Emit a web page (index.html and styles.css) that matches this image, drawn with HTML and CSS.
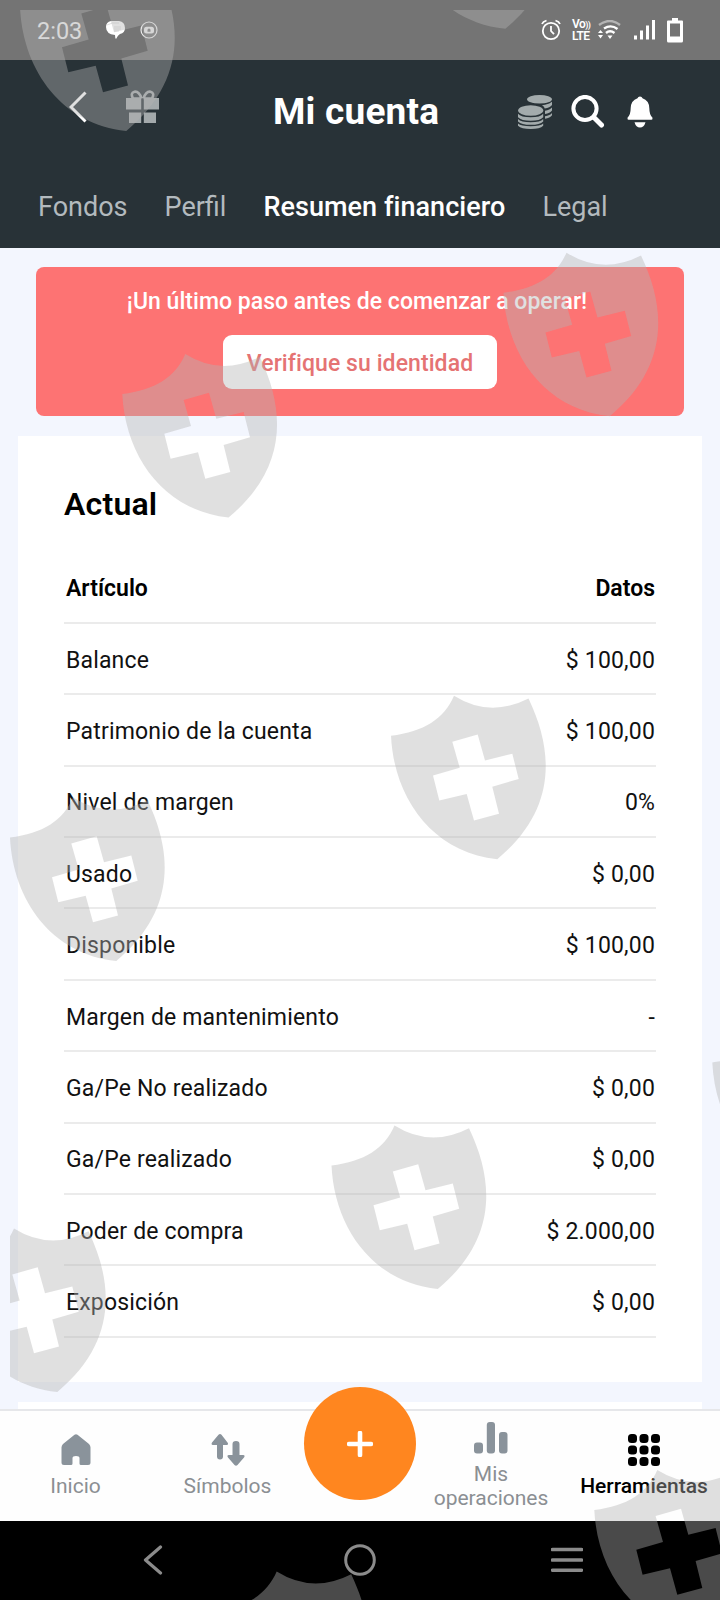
FILE: index.html
```
<!DOCTYPE html>
<html lang="es">

<head>
    <meta charset="UTF-8">
    <meta name="viewport" content="width=device-width, initial-scale=1.0">
    <title>Mi cuenta</title>
    <link rel="stylesheet" href="styles.css">
</head>

<body>
    <div class="status-bar">
        <span class="time">2:03</span>
        <svg class="chat-icon" width="20" height="19" viewBox="0 0 20 19">
            <path d="M5 0h8q6 1 6 7q0 5-5 6q-2 1-4 5q-1-1-1-4Q0 13 0 6Q0 1 5 0z" fill="#fff" />
            <path d="M1 4Q6 1 13 2M8 6h7M8 8h7M8 10h5" stroke="#ccc" stroke-width="0.6" fill="none" />
        </svg>
        <svg class="app-icon" width="18" height="18" viewBox="0 0 18 18">
            <circle cx="9" cy="9" r="8" fill="none" stroke="#eee" stroke-width="1.2" />
            <rect x="4" y="5.8" width="10" height="6.8" rx="2.5" fill="#eee" />
            <path d="M7.5 10.8V9a1.5 1.5 0 0 1 3 0v1.8z" fill="#777" />
        </svg>
        <div class="status-right">
            <svg width="20" height="22" viewBox="0 0 20 22" fill="none" stroke="#fff" stroke-width="1.8">
                <circle cx="10" cy="12" r="8.2" />
                <path d="M10 7v5l3 3.2M1 5Q2 2.5 5.5 1.5M19 5Q18 2.5 14.5 1.5" />
            </svg>
            <div class="volte"><span>Vo<i>))</i></span><span>LTE</span></div>
            <svg class="wifi" width="23" height="20" viewBox="0 0 23 20" fill="none">
                <path d="M1 5Q12-3 22 5" stroke="#b4b4b4" stroke-width="2.4" />
                <path d="M6 8.500Q13 4 19.5 9M8 13Q12 9.5 16.500 13" stroke="#fff" stroke-width="2.4" />
                <path d="M9.5 15.5h5L12 19zM0 13l2.5-3L5 13zM0 15h5l-2.5 3.5z" fill="#fff" />
            </svg>
            <svg class="signal" width="22" height="20" viewBox="0 0 22 20" fill="#fff">
                <rect x="0" y="15.5" width="3" height="4" />
                <rect x="6" y="10.5" width="3" height="9" />
                <rect x="12" y="5.5" width="3" height="14" />
                <rect x="18" y="0" width="3" height="19.5" />
            </svg>
            <svg class="battery" width="16" height="25" viewBox="0 0 16 25">
                <path d="M5 0h6v2.5h4q1 0 1 1V23q0 1.5-1.5 1.5h-13Q0 24.500 0 23V3.500q0-1 1-1h4zM3 5.500V18.500H13V5.500z" fill="#fff" fill-rule="evenodd" />
            </svg>
        </div>
    </div>

    <div class="header">
        <div class="title-row">
            <svg class="back-arrow" width="18" height="32" viewBox="0 0 18 32">
                <path d="M16.500 1.500L2 16L16.500 30.500" fill="none" stroke="#fff" stroke-width="3" />
            </svg>
            <svg class="gift" width="33" height="34" viewBox="0 0 33 34">
                <path d="M14.800 8.500H7Q4 3 8.500 1.700Q13 1 15.500 8.500M17.800 8.500H26Q29 3 24.500 1.700Q20 1 17.500 8.500" fill="none" stroke="#a3a9ab" stroke-width="2.600" />
                <path d="M0 8h15.200v11.500H0zM17.800 8H33v11.500H17.800zM3 22.500h12.200V33H3zM17.800 22.500H30V33H17.800z" fill="#a3a9ab" />
            </svg>
            <h1>Mi cuenta</h1>
            <svg class="coins" width="34" height="34" viewBox="0 0 34 34" fill="#a3abac">
                <ellipse cx="21.500" cy="4.300" rx="12.500" ry="4.300" />
                <path d="M27 9.800Q32 9 34 6.800V10Q32 12.600 26.700 13.500Q26.500 11.500 24 10.200zM27 15.800Q32 15 34 12.600V15.500Q32 18.300 27 19zM27 21.200Q32 20.500 34 18V20.300Q32 22.800 27 23.800z" />
                <ellipse cx="12.700" cy="15.500" rx="12.600" ry="5.200" />
                <path d="M0 18.700Q3 22.300 12.700 22.300T25.200 18.700V22.200Q22 25.700 12.700 25.700T0 22.200zM0 24Q3 27.300 12.700 27.300T25.200 24V26.400Q22 29.800 12.700 29.800T0 26.400zM0 28.500Q3 31.300 12.700 31.300T25.200 28.500V30.800Q22 34 12.700 34T0 30.800z" />
            </svg>
            <svg class="search" width="34" height="34" viewBox="0 0 34 34" fill="none" stroke="#fff">
                <circle cx="14" cy="13.500" r="11.600" stroke-width="4" />
                <path d="M23 22.500L30.500 30" stroke-width="5" stroke-linecap="round" />
            </svg>
            <svg class="bell" width="26" height="32" viewBox="0 0 26 32" fill="#fff">
                <path d="M10.500 2.300a2.600 2.600 0 0 1 5 0Q22 4.500 22.300 12Q22.400 19 25.400 21.500Q26 23.700 24.500 23.700H1.500Q0 23.700 .6 21.500Q3.600 19 3.700 12Q4 4.500 10.500 2.300zM7.500 26.200h11Q17 31.500 13 31.500T7.500 26.200z" />
            </svg>
        </div>
        <div class="tabs">
            <a class="tab">Fondos</a>
            <a class="tab perfil">Perfil</a>
            <a class="tab active">Resumen financiero</a>
            <a class="tab legal">Legal</a>
        </div>
    </div>

    <div class="content">
        <div class="banner">
            <p>¡Un último paso antes de comenzar a operar!</p>
            <button class="verify-btn">Verifique su identidad</button>
        </div>

        <div class="card">
            <h2>Actual</h2>
            <div class="row row-head"><span>Artículo</span><span>Datos</span></div>
            <div class="row"><span>Balance</span><span>$ 100,00</span></div>
            <div class="row"><span>Patrimonio de la cuenta</span><span>$ 100,00</span></div>
            <div class="row"><span>Nivel de margen</span><span>0%</span></div>
            <div class="row"><span>Usado</span><span>$ 0,00</span></div>
            <div class="row"><span>Disponible</span><span>$ 100,00</span></div>
            <div class="row"><span>Margen de mantenimiento</span><span>-</span></div>
            <div class="row"><span>Ga/Pe No realizado</span><span>$ 0,00</span></div>
            <div class="row"><span>Ga/Pe realizado</span><span>$ 0,00</span></div>
            <div class="row"><span>Poder de compra</span><span>$ 2.000,00</span></div>
            <div class="row"><span>Exposición</span><span>$ 0,00</span></div>
        </div>
        <div class="card-next"></div>
    </div>

    <div class="bottom-nav">
        <div class="nav-item">
            <svg width="30" height="32" viewBox="0 0 30 32">
                <path d="M13.500.8Q15-.4 16.500.8L28 10Q29.500 11.500 29.500 13.500V28.500Q29.500 31 27 31H20Q18.500 31 18.500 29.500V24Q18.500 22 15 22T11.500 24V29.500Q11.500 31 10 31H3Q.5 31 .5 28.500V13.500Q.5 11.500 2 10z" fill="#8a939b" />
            </svg>
            <span>Inicio</span>
        </div>
        <div class="nav-item">
            <svg width="34" height="32" viewBox="0 0 34 32" fill="#8a939b">
                <path d="M7.500.8Q9-.6 10.500.8L16.500 8.500Q18 11 15.500 11H12V22.500Q12 25.500 9 25.500T6 22.500V11H2Q-.2 11 1 8.500zM25 7q3.500 0 3.500 3V21H32Q34.500 21 33 23.500L26.500 31Q25 32.500 23.500 31L17 23.500Q15.500 21 18 21H21.500V10Q21.500 7 25 7z" />
            </svg>
            <span>Símbolos</span>
        </div>
        <div class="nav-item nav-center">
            <button class="add-btn">
                <svg width="26" height="26" viewBox="0 0 26 26">
                    <path d="M13 2V24M2 13H24" stroke="#fff" stroke-width="4.600" stroke-linecap="round" />
                </svg>
            </button>
        </div>
        <div class="nav-item nav-tall">
            <svg width="34" height="32" viewBox="0 0 34 32" fill="#8a939b">
                <rect x="0" y="20.500" width="9" height="11" rx="3" />
                <rect x="12.800" y="0" width="8.200" height="31.500" rx="3" />
                <rect x="25" y="10" width="8.500" height="21.500" rx="3" />
            </svg>
            <span>Mis<br>operaciones</span>
        </div>
        <div class="nav-item active">
            <svg width="32" height="32" viewBox="0 0 32 32" fill="#000">
                <rect x="0" y="0" width="9" height="9" rx="3.500" />
                <rect x="11.500" y="0" width="9" height="9" rx="3.500" />
                <rect x="23" y="0" width="9" height="9" rx="3.500" />
                <rect x="0" y="11.500" width="9" height="9" rx="3.500" />
                <rect x="11.500" y="11.500" width="9" height="9" rx="3.500" />
                <rect x="23" y="11.500" width="9" height="9" rx="3.500" />
                <rect x="0" y="23" width="9" height="9" rx="3.500" />
                <rect x="11.500" y="23" width="9" height="9" rx="3.500" />
                <rect x="23" y="23" width="9" height="9" rx="3.500" />
            </svg>
            <span>Herramientas</span>
        </div>
    </div>

    <div class="system-nav">
        <svg width="20" height="30" viewBox="0 0 20 30">
            <path d="M17.500 2L2.500 15L17.500 28" fill="none" stroke="#8b8b8b" stroke-width="3.200" stroke-linecap="round" stroke-linejoin="round" />
        </svg>
        <svg class="home-circle" width="32" height="32" viewBox="0 0 32 32">
            <circle cx="16" cy="16" r="14.300" fill="none" stroke="#8b8b8b" stroke-width="3" />
        </svg>
        <svg width="32" height="26" viewBox="0 0 32 26">
            <path d="M1.500 2.500H30.500M1.500 13H30.500M1.500 23.200H30.500" stroke="#8b8b8b" stroke-width="3.600" stroke-linecap="round" />
        </svg>
    </div>

    <!-- Shield watermark over the whole screen -->
    <svg class="watermark" width="710" height="1590" viewBox="10 10 710 1590">
        <defs>
            <path id="shield" fill-rule="evenodd" d="M63 0Q99 22.500 137.500 2.700C164 58 164.500 115 106.300 163.500C42 157 3 103 0 40C33 36 53 23 63 0z
                M61.300 46L68.700 72L42 79.700L48.300 104.700L75.700 98.300L83 124.700L108 118L101.300 91L127.700 83.300L121.300 58L94 64.700L86.700 38.700z" />
        </defs>
        <g fill="#b3b3b3" fill-opacity="0.41">
            <use href="#shield" x="20" y="-32.500" />
            <use href="#shield" x="399" y="-134.700" />
            <use href="#shield" x="122.300" y="354" />
            <use href="#shield" x="503.500" y="252.700" />
            <use href="#shield" x="391" y="695.700" />
            <use href="#shield" x="10" y="797.500" />
            <use href="#shield" x="331.500" y="1125.500" />
            <use href="#shield" x="-49" y="1228.500" />
            <use href="#shield" x="712.300" y="1022.500" />
            <use href="#shield" x="594.300" y="1470" />
            <use href="#shield" x="213.700" y="1571.500" />
        </g>
    </svg>
</body>

</html>
```
FILE: styles.css
```
* {
    margin: 0;
    padding: 0;
    box-sizing: border-box;
    font-family: Roboto, sans-serif;
}

body {
    position: relative;
    width: 720px;
    height: 1600px;
    background: #f3f6fe;
    display: flex;
    flex-direction: column;
    overflow: hidden;
}

.status-bar {
    height: 60px;
    background: #747474;
    display: flex;
    align-items: center;
    padding: 0 37px;
    color: #f1f1f1;
}

.time {
    width: 69px;
    font-size: 23.5px;
    padding-top: 2px;
}

.app-icon {
    margin-left: 14px;
}

.status-right {
    margin-left: auto;
    display: flex;
    align-items: center;
}

.volte {
    width: 20px;
    margin: 0 6px 0 11px;
    display: flex;
    flex-direction: column;
    font-size: 12px;
    line-height: 11px;
    font-weight: 600;
    letter-spacing: -0.6px;
    white-space: nowrap;
    color: #fff;
}

.volte i {
    font-size: 9px;
    font-style: normal;
}

.signal {
    margin: 0 11px 0 13px;
}

.header {
    height: 188px;
    background: #283237;
}

.title-row {
    height: 102px;
    padding: 0 67px 0 69px;
    display: flex;
    align-items: center;
}

.back-arrow {
    margin-top: -8px;
}

.gift {
    margin: -8px 0 0 39px;
}

h1 {
    width: 169px;
    margin: 1px 0 0 114px;
    font-size: 37px;
    font-weight: 700;
    letter-spacing: 0.2px;
    color: #fff;
    white-space: nowrap;
}

.coins {
    margin: 2px 0 0 auto;
}

.search {
    margin: 2px 0 0 19px;
}

.bell {
    margin: 2px 0 0 22px;
}

.tabs {
    display: flex;
    padding: 29px 0 0 38px;
    gap: 37px;
    font-size: 27px;
    line-height: 32px;
    color: #b3babe;
}

.tab {
    white-space: nowrap;
}

.tab.active {
    font-weight: 500;
    letter-spacing: 0.05px;
    color: #fff;
}

.content {
    height: 1161px;
    padding: 19px 18px 0;
    overflow: hidden;
}

.banner {
    height: 149px;
    margin: 0 18px 20px;
    padding-top: 20px;
    border-radius: 8px;
    background: #fd7373;
    text-align: center;
}

.banner p {
    padding-right: 6px;
    font-size: 23px;
    line-height: 30px;
    font-weight: 500;
    letter-spacing: 0.03px;
    color: #fff;
}

.verify-btn {
    width: 274px;
    height: 54px;
    margin-top: 18px;
    padding-top: 2px;
    border: none;
    border-radius: 9px;
    background: #fff;
    color: #e57373;
    font-size: 23px;
    font-weight: 500;
    letter-spacing: 0.08px;
    white-space: nowrap;
}

.card {
    height: 946px;
    margin-bottom: 20px;
    padding: 46px 46px 0;
    background: #fff;
}

h2 {
    height: 70.5px;
    font-size: 32px;
    line-height: 44px;
    font-weight: 600;
    letter-spacing: 0.2px;
}

.row {
    height: 71.4px;
    padding: 3px 1px 0 2px;
    display: flex;
    justify-content: space-between;
    align-items: center;
    border-bottom: 2px solid #ebebeb;
    font-size: 23px;
    letter-spacing: 0.17px;
    color: #111;
}

.row-head {
    font-weight: 600;
    letter-spacing: 0;
    color: #000;
}

.card-next {
    height: 40px;
    background: #fff;
}

.bottom-nav {
    height: 112px;
    border-top: 2px solid #e6e7ea;
    background: #fefefe;
    display: grid;
    grid-template-columns: 151px 153px 112px 150px 156px;
}

.nav-item {
    display: flex;
    flex-direction: column;
    align-items: center;
    padding-top: 23px;
    font-size: 21px;
    line-height: 24px;
    text-align: center;
    color: #8b8f93;
}

.nav-item span {
    margin-top: 8px;
}

.nav-tall {
    padding-top: 11px;
}

.nav-item.active {
    color: #000;
    font-weight: 500;
}

.nav-center {
    padding: 0;
}

.add-btn {
    flex: none;
    width: 112px;
    height: 113px;
    margin-top: -24px;
    border: none;
    border-radius: 50%;
    background: #ff861f;
    display: flex;
    align-items: center;
    justify-content: center;
}

.system-nav {
    height: 79px;
    padding: 0 137px 2px 143px;
    background: #000;
    display: flex;
    justify-content: space-between;
    align-items: center;
}

.home-circle {
    margin-left: 6px;
}

.watermark {
    position: absolute;
    left: 10px;
    top: 10px;
}
```
